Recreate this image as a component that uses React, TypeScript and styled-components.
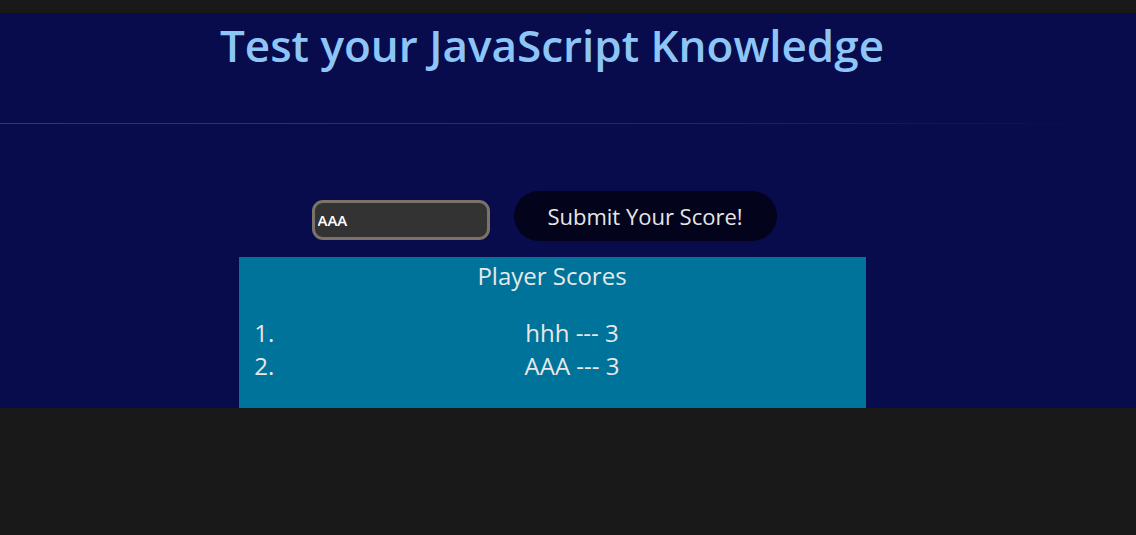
import React from "react";
import styled, { createGlobalStyle } from "styled-components";

const GlobalStyle = createGlobalStyle`
  html, body {
    margin: 0;
    padding: 0;
    background: #181918;
    font-family: "Open Sans", "Noto Sans", sans-serif;
  }
`;

const Page = styled.div`
  padding-top: 13px;
`;

const Main = styled.main`
  background: #080b4c;
  height: 395px;
  overflow: hidden;
`;

const Column = styled.div`
  width: 1104px;
  display: flex;
  flex-direction: column;
  align-items: center;
`;

const Title = styled.h1`
  margin: 2px 0 0 0;
  font-size: 44px;
  font-weight: 600;
  color: #8ec5f7;
  line-height: normal;
`;

const Rule = styled.hr`
  align-self: stretch;
  width: 1110px;
  margin: 48px 0 0 0;
  border: 0;
  height: 1px;
  background: linear-gradient(to right, rgba(120, 70, 95, 0.6), rgba(120, 70, 95, 0.4) 60%, rgba(120, 70, 95, 0));
`;

const Form = styled.form`
  display: flex;
  align-items: flex-start;
  gap: 24px;
  margin-top: 67px;
  margin-left: -16px;
`;

const NameInput = styled.input`
  box-sizing: border-box;
  width: 178px;
  height: 40px;
  margin-top: 9px;
  padding: 0 3px;
  background: #333333;
  border: 3px solid #7b7268;
  border-radius: 11px;
  color: #ffffff;
  font-family: "Open Sans", sans-serif;
  font-size: 15px;
  font-weight: 600;
  outline: none;
`;

const SubmitButton = styled.button`
  box-sizing: border-box;
  width: 263px;
  height: 50px;
  border: 0;
  border-radius: 25px;
  background: #03031c;
  color: #e6e6e6;
  font-family: "Open Sans", sans-serif;
  font-size: 22px;
  cursor: pointer;
`;

const ScorePanel = styled.section`
  box-sizing: border-box;
  width: 627px;
  height: 160px;
  margin-top: 16px;
  padding-top: 2px;
  background: #00739a;
  color: #e8e8e8;
  font-size: 24px;
`;

const PanelTitle = styled.h3`
  margin: 0;
  font-size: 24px;
  font-weight: 400;
  text-align: center;
  line-height: normal;
`;

const ScoreList = styled.ol`
  margin: 24px 0 0 0;
  padding: 0 2px 0 42px;
`;

const ScoreItem = styled.li`
  text-align: center;
  line-height: 33px;
`;

const scores = [
  { name: "hhh", score: 3 },
  { name: "AAA", score: 3 },
];

export default function App() {
  return (
    <>
      <GlobalStyle />
      <Page>
        <Main>
          <Column>
            <Title>Test your JavaScript Knowledge</Title>
            <Rule />
            <Form onSubmit={(e) => e.preventDefault()}>
              <NameInput defaultValue="AAA" />
              <SubmitButton type="submit">Submit Your Score!</SubmitButton>
            </Form>
            <ScorePanel>
              <PanelTitle>Player Scores</PanelTitle>
              <ScoreList>
                {scores.map((s, i) => (
                  <ScoreItem key={i}>
                    {s.name} --- {s.score}
                  </ScoreItem>
                ))}
              </ScoreList>
            </ScorePanel>
          </Column>
        </Main>
      </Page>
    </>
  );
}
